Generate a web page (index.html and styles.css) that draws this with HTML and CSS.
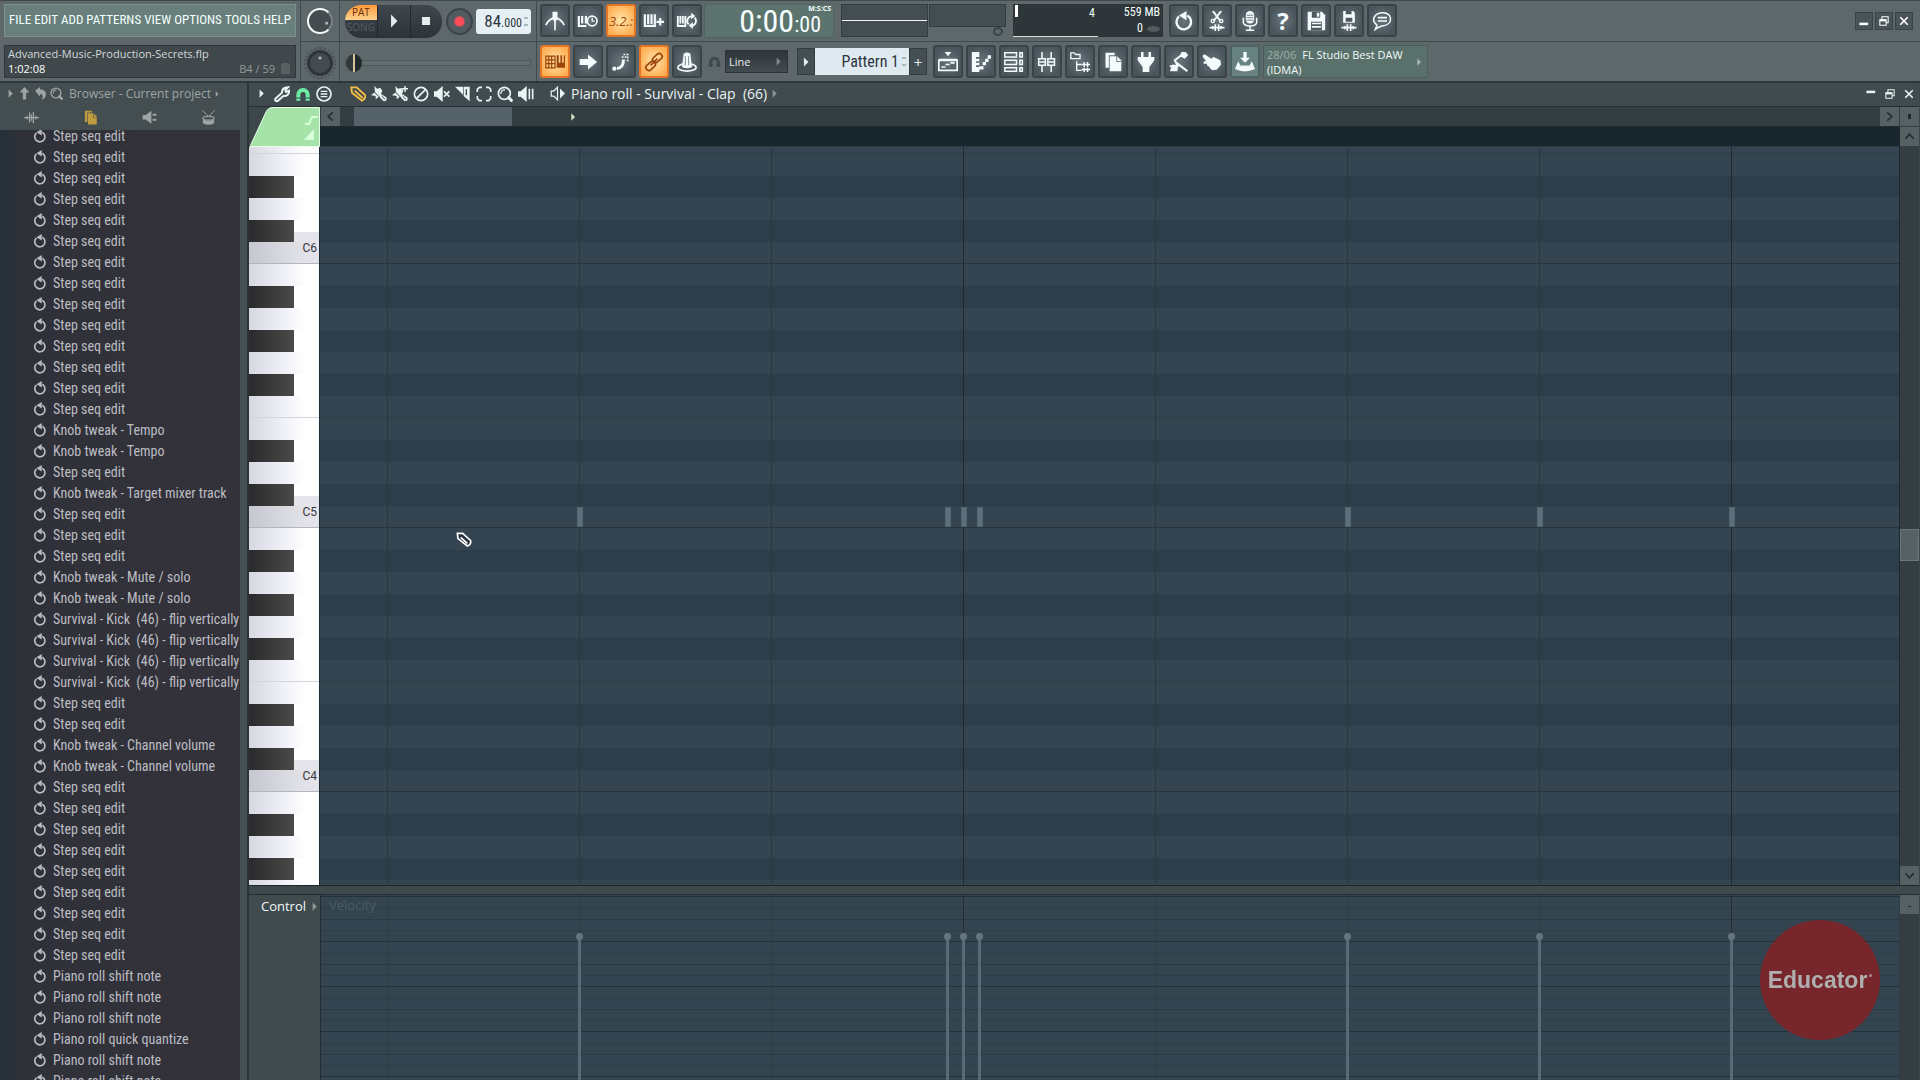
FILE: index.html
```
<!DOCTYPE html>
<html lang="en">
<head>
    <meta charset="UTF-8">
    <meta name="viewport" content="width=device-width, initial-scale=1.0">
    <title>Advanced-Music-Production-Secrets.flp</title>
    <link rel="stylesheet" href="styles.css">
</head>
<body>
    <svg class="sprite" aria-hidden="true">
        <symbol id="undo" viewBox="0 0 24 24"><path d="M6 6.500a8.800 8.800 0 1 0 10-1" fill="none" stroke="currentColor" stroke-width="2.800"/><path d="M15 0v11L6 5.500z" fill="currentColor"/></symbol>
        <symbol id="tri" viewBox="0 0 24 24"><path d="M7 1l11 11L7 23z" fill="currentColor"/></symbol>
        <symbol id="stop" viewBox="0 0 24 24"><path d="M4 4h16v16H4z" fill="currentColor"/></symbol>
        <symbol id="metro" viewBox="0 0 24 24"><path d="M1 17Q5 9 12 8q7 1 11 9M12 8v15" fill="none" stroke="currentColor" stroke-width="2"/><path d="M9 1h6v9l-3 3-3-3z" fill="currentColor"/></symbol>
        <symbol id="wait" viewBox="0 0 24 24"><path d="M1 6v12h9M5 6v9M9.500 6v9" fill="none" stroke="currentColor" stroke-width="2.600"/><circle cx="17" cy="12" r="5.800" fill="none" stroke="currentColor" stroke-width="2"/><path d="M17 8v4h3" fill="none" stroke="currentColor" stroke-width="1.500"/></symbol>
        <symbol id="keysplus" viewBox="0 0 24 24"><path d="M1 4v14h12V4M5 4v12M9 4v12M15 13H24M19.500 8.500v9" fill="none" stroke="currentColor" stroke-width="2.600"/></symbol>
        <symbol id="keysloop" viewBox="0 0 24 24"><path d="M1 6v12h9V6M4 6v9M7 6v9" fill="none" stroke="currentColor" stroke-width="2.200"/><path d="M14 16a5.500 5.500 0 0 1 4-9.500M21 8a5.500 5.500 0 0 1-3 9.500" fill="none" stroke="currentColor" stroke-width="2.200"/><path d="M17 2l5 4-5 4zM19 13.500l-5 4 5 4z" fill="currentColor"/></symbol>
        <symbol id="typing" viewBox="0 0 24 24"><path d="M1 5h11v14H1zM1 9.500h11M1 14h11M4.500 5v14M8 5v14" fill="none" stroke="currentColor" stroke-width="1.500"/><path d="M14 4v15h10V4h-1.500v9h-2V4h-2v9h-2V4z" fill="currentColor"/></symbol>
        <symbol id="arrow" viewBox="0 0 24 24"><path d="M2 8.500h10V3l11 9-11 9v-5.500H2z" fill="currentColor"/></symbol>
        <symbol id="slide" viewBox="0 0 24 24"><path d="M7 20q8-1 8-11" fill="none" stroke="currentColor" stroke-width="3.500"/><circle cx="4" cy="20" r="2.500" fill="currentColor"/><path d="M13 6h7M15 3h6M20 2v10" fill="none" stroke="currentColor" stroke-width="2" stroke-dasharray="2 1.500"/></symbol>
        <symbol id="link" viewBox="0 0 24 24"><g fill="none" stroke="currentColor" stroke-width="2"><rect x="10" y="4" width="13" height="7" rx="3.500" transform="rotate(-42 16 8)"/><rect x="1" y="13" width="13" height="7" rx="3.500" transform="rotate(-42 8 16)"/><path d="M8 16l8-8"/></g></symbol>
        <symbol id="hat" viewBox="0 0 24 24"><ellipse cx="12" cy="18.500" rx="11" ry="4.500" fill="none" stroke="currentColor" stroke-width="2"/><path d="M6 18L8 2q4-3 8 0l2 16q-6 3-12 0z" fill="currentColor"/><path d="M10 5v11M14 5v11" stroke="#69727a"/></symbol>
        <symbol id="magnet" viewBox="0 0 24 24"><path d="M5 22v-9a7 7 0 0 1 14 0v9" fill="none" stroke="currentColor" stroke-width="6"/><path d="M1 18h8M15 18h8" stroke="#3a4347" stroke-width="1.500"/></symbol>
        <symbol id="playlist" viewBox="0 0 24 24"><path d="M8 0h8l-4 5zM1 8h22v3H1z" fill="currentColor"/><path d="M1 9v13h22V9M4 18h5M9 15h5M15 13h5" fill="none" stroke="currentColor" stroke-width="2"/></symbol>
        <symbol id="roll" viewBox="0 0 24 24"><path d="M1 0h9v6H6v2h4v3H6v2h4v3H6v2h4v6H1zM10 17h5v4h-5zM14 12h4v4h-4zM17 8h4v4h-4zM20 4h4v4h-4z" fill="currentColor"/></symbol>
        <symbol id="rack" viewBox="0 0 24 24"><path d="M1 1h14v5H1zM1 10h14v5H1zM1 19h14v4H1zM19 1h3v5h-3zM19 10h3v5h-3zM19 19h3v4h-3z" fill="none" stroke="currentColor" stroke-width="1.800"/></symbol>
        <symbol id="mixer" viewBox="0 0 24 24"><path d="M6 0v8M6 16v8M17 0v8M17 16v8M2 8h8v8H2zM13 8h8v8h-8zM2 12h8M13 12h8" fill="none" stroke="currentColor" stroke-width="1.800"/></symbol>
        <symbol id="tree" viewBox="0 0 24 24"><path d="M1 8V1h4l2 2h5v5zM8 11v11h6M8 15h6" fill="none" stroke="currentColor" stroke-width="1.600"/><path d="M14 15h10M14 21h10M17 12v6M21 12v6M17 19v5M21 19v5" stroke="currentColor" stroke-width="1.800"/></symbol>
        <symbol id="copy" viewBox="0 0 24 24"><path d="M3 1h11v3H7v15H3z" fill="currentColor"/><path d="M8 5h8v7h6v11H8zM17 5l6 6h-6z" fill="currentColor"/></symbol>
        <symbol id="plug" viewBox="0 0 24 24"><path d="M6 0h3v6h6V0h3v6h4v4l-6 8v6H8v-6L2 10V6h4z" fill="currentColor"/></symbol>
        <symbol id="pump" viewBox="0 0 24 24"><path d="M16 3L7 10q2 3 3 7H1M9 13l13 10" fill="none" stroke="currentColor" stroke-width="2.400"/><path d="M15 0h5l3 4-4 4-6-3zM1 23l3-8 7 1-1 7z" fill="currentColor"/></symbol>
        <symbol id="hand" viewBox="0 0 24 24"><path d="M1 4q2-2 4 0l6 4 3-2 8 4 1 5-5 6-5 1-3-2-1-2-3-2v-2l-4 0q-1-2 1-3l2 0-4-5z" fill="currentColor"/></symbol>
        <symbol id="download" viewBox="0 0 24 24"><path d="M10 0h4v7h4l-6 6-6-6h4z" fill="currentColor"/><path d="M4 13l-3 7q11 5 22 0l-3-7-2 4H6z" fill="currentColor" stroke="currentColor" stroke-width="1.500"/></symbol>
        <symbol id="scissors" viewBox="0 0 24 24"><path d="M7 0l9 12M17 0L8 12" stroke="currentColor" stroke-width="2.400"/><circle cx="7" cy="12" r="2" fill="none" stroke="currentColor" stroke-width="1.600"/><circle cx="17" cy="12" r="2" fill="none" stroke="currentColor" stroke-width="1.600"/><path d="M3 20h18M7 18v4M10 16v8M14 16v8M17 18v4" stroke="currentColor" stroke-width="2"/></symbol>
        <symbol id="mic" viewBox="0 0 24 24"><rect x="7" y="0" width="10" height="15" rx="5" fill="currentColor"/><path d="M4 8v6q1 4 8 4t8-4V8M12 18v5M7 23h10" fill="none" stroke="currentColor" stroke-width="1.800"/><path d="M8 5h8M8 8h8M8 11h8" stroke="#59636a"/></symbol>
        <symbol id="save" viewBox="0 0 24 24"><path d="M2 1h17l4 4v18H2z" fill="currentColor"/><path d="M7 1h10v7H7zM6 13h13v10H6z" fill="#4f585f"/><path d="M13 2h3v5h-3zM7 14h11v2H7zM7 18h11v2H7z" fill="currentColor"/></symbol>
        <symbol id="saveas" viewBox="0 0 24 24"><path d="M5 0h12l2 2v12H5z" fill="currentColor"/><path d="M8 0h7v4H8zM8 8h8v5H8z" fill="#4f585f"/><path d="M3 20h18M7 18v4M10 16v8M14 16v8M17 18v4" stroke="currentColor" stroke-width="2"/></symbol>
        <symbol id="chat" viewBox="0 0 24 24"><path d="M4 22l2-5C-2 11 3 2 13 2c12 0 13 15-1 16q-4 1-8 4z" fill="none" stroke="currentColor" stroke-width="1.800"/><path d="M7 8h11M7 12h11" stroke="currentColor" stroke-width="2"/></symbol>
        <symbol id="min" viewBox="0 0 24 24"><path d="M1 16h21v6H1z" fill="currentColor"/></symbol>
        <symbol id="restore" viewBox="0 0 24 24"><path d="M2 9h15v13H2zM7 8V2h15v14h-5" fill="none" stroke="currentColor" stroke-width="2.500"/><path d="M2 8h15v5H2z" fill="currentColor"/></symbol>
        <symbol id="close" viewBox="0 0 24 24"><path d="M3 3l18 18M21 3L3 21" stroke="currentColor" stroke-width="4"/></symbol>
        <symbol id="up" viewBox="0 0 24 24"><path d="M12 0l9 10h-6v13H9V10H3z" fill="currentColor"/></symbol>
        <symbol id="back" viewBox="0 0 24 24"><path d="M2 7l9-7v4q14 1 10 14-2 5-7 5 6-9-3-10v5z" fill="currentColor"/></symbol>
        <symbol id="lens" viewBox="0 0 24 24"><circle cx="11" cy="11" r="9" fill="none" stroke="currentColor" stroke-width="2.500"/><path d="M16 16l7 7" stroke="currentColor" stroke-width="4.500"/><path d="M6 12a5 5 0 0 1 6-6" fill="none" stroke="currentColor" stroke-width="2"/></symbol>
        <symbol id="wave" viewBox="0 0 24 24"><path d="M0 12h24M5 9v6M9 4v16M12 7v10M15 3v18M19 9v6" stroke="currentColor" stroke-width="2"/></symbol>
        <symbol id="horn" viewBox="0 0 24 24"><path d="M1 8h5l9-7v21l-9-7H1zM17 6h6v3h-6zM17 14h6v3h-6z" fill="currentColor"/></symbol>
        <symbol id="drum" viewBox="0 0 24 24"><path d="M2 0l10 11M22 0L12 11" stroke="currentColor" stroke-width="1.500"/><ellipse cx="12" cy="13" rx="9" ry="3" fill="none" stroke="currentColor" stroke-width="2"/><path d="M3 15q9 4 18 0v6q-9 5-18 0z" fill="currentColor"/></symbol>
        <symbol id="wrench" viewBox="0 0 24 24"><path d="M2 19L12 10q0-8 9-8l-4 4 1 3 5-2q-1 9-9 8L5 23q-4 0-3-4z" fill="none" stroke="currentColor" stroke-width="3"/></symbol>
        <symbol id="menu" viewBox="0 0 24 24"><circle cx="12" cy="12" r="10.500" fill="none" stroke="currentColor" stroke-width="2.500"/><path d="M7 8h10M7 12h10M7 16h10" stroke="currentColor" stroke-width="2"/></symbol>
        <symbol id="pencil" viewBox="0 0 24 24"><path d="M2 2h8l13 12q0 6-5 8L3 10zM7 7l12 11" fill="none" stroke="currentColor" stroke-width="2.800"/></symbol>
        <symbol id="brush" viewBox="0 0 24 24"><path d="M5 0l4 4 5-1 3 4-2 5 8 5q2 6-4 6l-7-7-5 4 0-5-7-1 6-5z" fill="currentColor"/><path d="M5 9l8 8M16 15l5 5" stroke="#3d474b" stroke-width="1.500"/></symbol>
        <symbol id="brushplus" viewBox="0 0 24 24"><use href="#brush"/><path d="M15 4h9M19.500 0v9" stroke="currentColor" stroke-width="2.200"/></symbol>
        <symbol id="no" viewBox="0 0 24 24"><circle cx="12" cy="12" r="10" fill="none" stroke="currentColor" stroke-width="2.500"/><path d="M5 19L19 5" stroke="currentColor" stroke-width="2.500"/></symbol>
        <symbol id="mute" viewBox="0 0 24 24"><path d="M0 8h4l9-8v24l-9-8H0z" fill="currentColor"/><path d="M15 8l8 8M23 8l-8 8" stroke="currentColor" stroke-width="2.400"/></symbol>
        <symbol id="slice" viewBox="0 0 24 24"><path d="M0 1h12v12zM13 1h9v22l-9-8z" fill="currentColor"/><path d="M17 5v9" stroke="#3d474b" stroke-width="2"/></symbol>
        <symbol id="select" viewBox="0 0 24 24"><path d="M2 9V5l3-3h4M15 2h4l3 3v4M22 15v4l-3 3h-4M9 22H5l-3-3v-4" fill="none" stroke="currentColor" stroke-width="2.500"/></symbol>
        <symbol id="playback" viewBox="0 0 24 24"><path d="M0 8h4l9-8v24l-9-8H0z" fill="currentColor"/><path d="M17 4v16M22 4v16" stroke="currentColor" stroke-width="2.500"/></symbol>
        <symbol id="speaker" viewBox="0 0 24 24"><path d="M2 8h4l6-6v20l-6-6H2z" fill="none" stroke="currentColor" stroke-width="2"/><path d="M16 4l8 8-8 8z" fill="currentColor"/></symbol>
        <symbol id="chev" viewBox="0 0 24 24"><path d="M7 3l10 9-10 9" fill="none" stroke="currentColor" stroke-width="3.500"/></symbol>
    </svg>

    <header class="toolbar">
        <div class="menu-panel">
            <nav class="menu">
                <button>FILE</button><button>EDIT</button><button>ADD</button><button>PATTERNS</button><button>VIEW</button><button>OPTIONS</button><button>TOOLS</button><button>HELP</button>
            </nav>
            <div class="hint">
                <span>Advanced-Music-Production-Secrets.flp</span>
                <div class="hint-row"><b>1:02:08</b><span class="hint-key">B4 / 59</span><i class="hint-icon"></i></div>
            </div>
        </div>
        <div class="knobs">
            <div class="cell"><i class="knob ring"></i></div>
            <div class="cell"><i class="knob dots"></i></div>
        </div>
        <div class="transport">
            <div class="cell">
                <div class="play-group">
                    <button class="mode"><span class="pat">PAT</span><span class="song">SONG</span></button>
                    <button class="play" aria-label="Play"><svg><use href="#tri"/></svg></button>
                    <button class="stop" aria-label="Stop"><svg><use href="#stop"/></svg></button>
                </div>
                <button class="rec" aria-label="Record"></button>
                <div class="tempo"><b>84</b><span>.000</span><i class="spin"></i></div>
            </div>
            <div class="cell"><input class="pitch" type="range" min="0" max="100" value="0" aria-label="Song position"></div>
        </div>
        <div class="panels">
            <div class="panel-row">
                <div class="tools">
                    <button class="tool" aria-label="Metronome"><svg><use href="#metro"/></svg></button>
                    <button class="tool" aria-label="Wait for input"><svg><use href="#wait"/></svg></button>
                    <button class="tool on" aria-label="Countdown"><span class="count">3.2.:</span></button>
                    <button class="tool" aria-label="Overdub"><svg><use href="#keysplus"/></svg></button>
                    <button class="tool" aria-label="Loop record"><svg><use href="#keysloop"/></svg></button>
                </div>
                <div class="time"><span class="big">0:00</span><span class="cs">:00</span><small>M:S:CS</small></div>
                <div class="scope"><div class="scope-wave"></div><div class="scope-side"><i class="scope-peak"></i><i class="scope-knob"></i></div></div>
                <div class="cpu">
                    <div class="cpu-left"><i></i><span>4</span></div>
                    <div class="cpu-right"><span>559 MB</span><span class="poly">0<i></i></span></div>
                </div>
                <div class="tools">
                    <button class="tool" aria-label="Undo"><svg><use href="#undo"/></svg></button>
                    <button class="tool" aria-label="Cut"><svg><use href="#scissors"/></svg></button>
                    <button class="tool" aria-label="Record audio"><svg><use href="#mic"/></svg></button>
                    <button class="tool help">?</button>
                    <button class="tool" aria-label="Save"><svg><use href="#save"/></svg></button>
                    <button class="tool" aria-label="Render"><svg><use href="#saveas"/></svg></button>
                    <button class="tool" aria-label="Chat"><svg><use href="#chat"/></svg></button>
                </div>
                <div class="win-buttons">
                    <button aria-label="Minimize"><svg><use href="#min"/></svg></button>
                    <button aria-label="Restore"><svg><use href="#restore"/></svg></button>
                    <button aria-label="Close"><svg><use href="#close"/></svg></button>
                </div>
            </div>
            <div class="panel-row">
                <div class="tools">
                    <button class="tool on" aria-label="Typing keyboard"><svg><use href="#typing"/></svg></button>
                    <button class="tool" aria-label="Step edit"><svg><use href="#arrow"/></svg></button>
                    <button class="tool" aria-label="Slide"><svg><use href="#slide"/></svg></button>
                    <button class="tool on" aria-label="Link"><svg><use href="#link"/></svg></button>
                    <button class="tool" aria-label="Multilink"><svg><use href="#hat"/></svg></button>
                </div>
                <div class="snap">
                    <svg class="snap-magnet"><use href="#magnet"/></svg>
                    <div class="snap-select"><select aria-label="Snap"><option>Line</option></select><svg><use href="#tri"/></svg></div>
                </div>
                <div class="pattern">
                    <button aria-label="Pattern menu"><svg><use href="#tri"/></svg></button>
                    <input type="text" value="Pattern 1" aria-label="Pattern">
                    <i class="spin"></i>
                    <button>+</button>
                </div>
                <div class="tools">
                    <button class="tool" aria-label="Playlist"><svg><use href="#playlist"/></svg></button>
                    <button class="tool" aria-label="Piano roll"><svg><use href="#roll"/></svg></button>
                    <button class="tool" aria-label="Channel rack"><svg><use href="#rack"/></svg></button>
                    <button class="tool" aria-label="Mixer"><svg><use href="#mixer"/></svg></button>
                    <button class="tool" aria-label="Browser"><svg><use href="#tree"/></svg></button>
                    <button class="tool" aria-label="Project picker"><svg><use href="#copy"/></svg></button>
                    <button class="tool" aria-label="Plugin picker"><svg><use href="#plug"/></svg></button>
                    <button class="tool" aria-label="Tempo tapper"><svg><use href="#pump"/></svg></button>
                    <button class="tool" aria-label="Touch"><svg><use href="#hand"/></svg></button>
                    <button class="tool green" aria-label="Updates"><svg><use href="#download"/></svg></button>
                </div>
                <a class="news" href="#"><span><time>28/06</time>FL Studio Best DAW<br>(IDMA)</span><svg><use href="#tri"/></svg></a>
            </div>
        </div>
    </header>

    <main class="workspace">
        <aside class="browser">
            <div class="browser-head">
                <div class="browser-title">
                    <svg class="small"><use href="#tri"/></svg><svg><use href="#up"/></svg><svg><use href="#back"/></svg><svg><use href="#lens"/></svg>
                    <span>Browser - Current project</span><svg class="tiny"><use href="#tri"/></svg>
                </div>
                <div class="browser-tabs">
                    <button aria-label="All"><svg><use href="#wave"/></svg></button>
                    <button class="active" aria-label="Project"><svg><use href="#copy"/></svg></button>
                    <button aria-label="Plugins"><svg><use href="#horn"/></svg></button>
                    <button aria-label="Drums"><svg><use href="#drum"/></svg></button>
                </div>
            </div>
            <ul class="history" id="history"></ul>
        </aside>

        <section class="piano">
            <div class="piano-bar">
                <div class="icons">
                    <svg class="small"><use href="#tri"/></svg>
                    <svg><use href="#wrench"/></svg>
                    <svg class="mint"><use href="#magnet"/></svg>
                    <svg><use href="#menu"/></svg>
                </div>
                <div class="icons">
                    <svg class="gold"><use href="#pencil"/></svg>
                    <svg><use href="#brush"/></svg>
                    <svg><use href="#brushplus"/></svg>
                    <svg><use href="#no"/></svg>
                    <svg><use href="#mute"/></svg>
                    <svg><use href="#slice"/></svg>
                    <svg><use href="#select"/></svg>
                    <svg><use href="#lens"/></svg>
                    <svg><use href="#playback"/></svg>
                </div>
                <svg><use href="#speaker"/></svg>
                <h1>Piano roll - Survival - Clap&nbsp; (66)</h1>
                <svg class="small dim"><use href="#tri"/></svg>
                <div class="piano-win">
                    <svg class="lift"><use href="#min"/></svg><svg><use href="#restore"/></svg><svg><use href="#close"/></svg>
                </div>
            </div>
            <div class="roll">
                <div class="corner">
                    <svg viewBox="0 0 71 40">
                        <path d="M1 39.500L17 5q2-4.500 7-4.500h46.500v39z" fill="#a5e3a8" stroke="#e4ffe6"/>
                        <path d="M56 17h4l3-7h6" fill="none" stroke="#d6ffda" stroke-width="2"/>
                        <path d="M55 33h10V22z" fill="#d6ffda"/>
                    </svg>
                </div>
                <div class="hscroll">
                    <button class="flip" aria-label="Scroll left"><svg><use href="#chev"/></svg></button>
                    <div class="thumb"></div>
                    <svg class="marker"><use href="#tri"/></svg>
                    <button class="end" aria-label="Scroll right"><svg><use href="#chev"/></svg></button>
                </div>
                <button class="dot" aria-label="Zoom"><i></i></button>
                <div class="ruler"></div>
                <div class="vscroll">
                    <button class="turn-up" aria-label="Scroll up"><svg><use href="#chev"/></svg></button>
                    <div class="vthumb"></div>
                    <button class="turn-down" aria-label="Scroll down"><svg><use href="#chev"/></svg></button>
                </div>
                <div class="keys" id="keys"></div>
                <div class="grid" id="grid">
                    <svg class="cursor" viewBox="0 0 24 24"><path d="M2 2h8l12 11q1 6-5 8L3 10z" fill="#26303a" stroke="#fff" stroke-width="2.500"/><path d="M7 8l10 9" stroke="#fff" stroke-width="2.500"/></svg>
                </div>
                <div class="split"></div>
                <div class="control"><button>Control<svg><use href="#tri"/></svg></button></div>
                <div class="velocity" id="velocity"><span>Velocity</span></div>
                <div class="control-side"><button>-</button></div>
            </div>
        </section>
    </main>
    <div class="educator">Educator<i></i></div>
    <script src="script.js"></script>
</body>
</html>
```
FILE: styles.css
```
* {
    margin: 0;
    padding: 0;
    box-sizing: border-box;
}

:root {
    --panel: #5e686b;
    --line: #3f4a4d;
    --dark: #3c4649;
    --narrow: "Roboto Condensed", "Open Sans Condensed", "Open Sans", sans-serif;
    --sans: "Open Sans", "Noto Sans", sans-serif;
}

body {
    height: 100vh;
    display: flex;
    flex-direction: column;
    overflow: hidden;
    background: var(--dark);
    color: #e4edee;
    font-family: var(--sans);
    font-size: 13px;
}

button, input, select {
    border: none;
    background: none;
    color: inherit;
    font: inherit;
}

svg {
    display: block;
    flex: none;
    width: 15px;
    height: 15px;
}

.sprite {
    position: absolute;
    width: 0;
    height: 0;
}

/* toolbar */

.toolbar {
    height: 83px;
    flex: none;
    display: flex;
    background: var(--panel);
    border-top: 1px solid var(--line);
    border-bottom: 2px solid #2e383b;
}

.menu-panel {
    width: 301px;
    padding: 3px 4px;
    display: flex;
    flex-direction: column;
    gap: 8px;
    border-right: 1px solid var(--line);
}

.menu {
    height: 33px;
    padding: 0 4px 2px;
    display: flex;
    align-items: center;
    justify-content: space-between;
    background: #687f7b;
    border: 1px solid #7b918d;
    font-family: var(--narrow);
    font-size: 13px;
    color: #f4ffff;
}

.hint {
    height: 33px;
    padding: 0 3px;
    background: #40484c;
    border: 1px solid #30383b;
    font-size: 11px;
    line-height: 15px;
    color: #d0d8d9;
}

.hint-row {
    display: flex;
    align-items: center;
}

.hint-row b {
    flex: 1;
    font-weight: 500;
    color: #fff;
}

.hint-key {
    color: #93999b;
}

.hint-icon {
    width: 9px;
    height: 11px;
    margin: 0 2px 0 6px;
    background: #596063;
    border-radius: 3px 3px 0 0;
}

.knobs {
    width: 39px;
    border-right: 1px solid var(--line);
}

.cell {
    height: 41px;
    display: flex;
    align-items: center;
    justify-content: center;
    border-bottom: 1px solid var(--line);
}

.cell:last-child {
    border-bottom: none;
}

.knob {
    width: 26px;
    height: 26px;
    border-radius: 50%;
    background: radial-gradient(circle at 50% 25%, #aab4b6 1px, #444c50 2px);
}

.ring {
    border: 2px solid #f2fafa;
    border-right-color: #788386;
    background: radial-gradient(circle at 80% 60%, #aab4b6 1px, #444c50 2px);
}

.dots {
    border: 3px solid #2f373a;
    outline: 2px dotted #48535a;
    outline-offset: 1px;
}

.transport {
    width: 197px;
    border-right: 1px solid var(--line);
}

.transport .cell {
    justify-content: flex-start;
    padding: 0 5px;
}

.play-group {
    width: 98px;
    height: 33px;
    display: flex;
    border-radius: 16px;
    overflow: hidden;
    background: linear-gradient(#3f464d, #2d3339);
}

.play-group button {
    flex: 1;
    display: flex;
    align-items: center;
    justify-content: center;
    border-left: 1px solid #23282d;
}

.play-group .mode {
    flex-direction: column;
    justify-content: flex-start;
    border-left: none;
    font-size: 10px;
    line-height: 15px;
}

.pat {
    width: 100%;
    background: linear-gradient(#ff9b3d, #ffd28f);
    color: #6b2f05;
}

.song {
    color: #555d63;
}

.play-group svg {
    width: 12px;
    height: 12px;
}

.play svg {
    width: 14px;
    height: 14px;
}

.rec {
    width: 27px;
    height: 27px;
    margin: 0 3px 0 4px;
    border-radius: 50%;
    border: 2px solid #3a4349;
    background: radial-gradient(circle, #ff4b55 0 4px, #505a60 6px);
}

.tempo {
    width: 55px;
    height: 25px;
    display: flex;
    align-items: baseline;
    justify-content: flex-end;
    padding: 0 9px 0 0;
    position: relative;
    border-radius: 3px;
    background: #e6f0f4;
    color: #2c3640;
    font-family: var(--narrow);
    font-size: 12px;
    line-height: 25px;
}

.tempo b {
    font-size: 17px;
    font-weight: normal;
}

.spin {
    position: absolute;
    right: 3px;
    top: 8px;
    width: 4px;
    height: 9px;
    border: solid #a9b9c0;
    border-width: 2px 0;
}

.pitch {
    width: 186px;
    height: 26px;
    appearance: none;
    background: none;
}

.pitch::-webkit-slider-runnable-track {
    height: 6px;
    border: 1px solid #4d585b;
    background: #626d70;
}

.pitch::-webkit-slider-thumb {
    appearance: none;
    width: 16px;
    height: 18px;
    margin-top: -7px;
    border-radius: 50%;
    background: linear-gradient(90deg, #33383b 7px, #d5c59a 7px 9px, #24292b 9px);
}

.panels {
    flex: 1;
    display: flex;
    flex-direction: column;
}

.panel-row {
    height: 41px;
    padding: 3px 7px 4px 3px;
    display: flex;
    align-items: center;
    border-bottom: 1px solid var(--line);
}

.panel-row:last-child {
    padding-bottom: 5px;
    border-bottom: none;
}

.tools {
    display: flex;
    gap: 3px;
}

.tool {
    width: 30px;
    height: 33px;
    display: flex;
    align-items: center;
    justify-content: center;
    border: 2px solid #39434a;
    border-radius: 3px;
    background: radial-gradient(#68737b, #4a545b 75%);
    color: #f3fbfc;
}

.tool svg {
    width: 22px;
    height: 20px;
}

.tool.on {
    border-color: #e37528;
    background: radial-gradient(#ffe6ae, #ffac4e 85%);
    color: #9b4509;
}

.tool.green {
    border-color: #4b6462;
    background: #678280;
}

.count {
    font-style: italic;
    font-size: 13px;
}

.help {
    font-size: 24px;
    font-weight: bold;
}

.time {
    width: 130px;
    height: 34px;
    margin: 0 7px 0 2px;
    padding-right: 12px;
    position: relative;
    display: flex;
    align-items: flex-end;
    justify-content: flex-end;
    background: #5c736e;
    border: 1px solid #506560;
    font-family: var(--narrow);
    color: #f4ffff;
}

.big {
    font-size: 32px;
    line-height: 32px;
}

.cs {
    font-size: 22px;
    line-height: 24px;
}

.time small {
    position: absolute;
    top: 0;
    right: 2px;
    font-family: var(--sans);
    font-size: 7px;
    font-weight: bold;
    line-height: 8px;
}

.scope {
    height: 33px;
    display: flex;
}

.scope-wave {
    width: 87px;
    border: 1px solid #333c41;
    background: linear-gradient(#444d52 15px, #f2f8f8 15px 16px, #444d52 16px);
}

.scope-side {
    width: 78px;
    display: flex;
    flex-direction: column;
    align-items: flex-end;
}

.scope-peak {
    width: 77px;
    height: 23px;
    background: #444d52;
    border: 1px solid #333c41;
}

.scope-knob {
    width: 10px;
    height: 9px;
    margin-right: 3px;
    border: 2px solid #3b4548;
    border-radius: 50%;
}

.cpu {
    width: 150px;
    height: 33px;
    margin: 0 6px 0 7px;
    display: flex;
    background: #2e3639;
    font-family: var(--narrow);
    font-size: 12px;
    line-height: 16px;
    color: #f4ffff;
}

.cpu-left {
    width: 85px;
    padding: 1px 3px 0 2px;
    display: flex;
    justify-content: space-between;
    border-bottom: 1px solid #d7dedf;
}

.cpu-left i {
    width: 3px;
    height: 12px;
    background: #fff;
}

.cpu-right {
    flex: 1;
    padding-right: 3px;
    text-align: right;
}

.cpu-right span {
    display: block;
}

.poly i {
    display: inline-block;
    width: 13px;
    height: 6px;
    margin-left: 4px;
    border-radius: 50%;
    background: #535d60;
}

.win-buttons {
    margin-left: auto;
    display: flex;
    gap: 2px;
}

.win-buttons button {
    width: 18px;
    height: 18px;
    display: flex;
    align-items: center;
    justify-content: center;
    background: #48535a;
    border: 1px solid #39434a;
    color: #fff;
}

.win-buttons svg {
    width: 10px;
    height: 10px;
}

.snap {
    width: 86px;
    margin-right: 9px;
    padding-left: 6px;
    display: flex;
    align-items: center;
    justify-content: space-between;
}

.snap-magnet {
    width: 13px;
    height: 13px;
    color: #414b4f;
}

.snap-select {
    width: 63px;
    height: 23px;
    padding: 0 4px 0 3px;
    display: flex;
    align-items: center;
    border: 1px solid #2d3439;
    background: linear-gradient(#2e363b, #424b50);
    font-size: 11px;
}

.snap-select select {
    flex: 1;
    appearance: none;
}

.snap-select svg {
    width: 9px;
    height: 9px;
    color: #7b868a;
}

.pattern {
    height: 27px;
    margin-right: 6px;
    display: flex;
    position: relative;
}

.pattern button {
    width: 18px;
    display: flex;
    align-items: center;
    justify-content: center;
    background: #454e54;
    border: 1px solid #333c41;
    font-size: 15px;
}

.pattern button svg {
    width: 10px;
    height: 10px;
}

.pattern input {
    width: 94px;
    padding-right: 10px;
    background: #dfeaf0;
    color: #2c3640;
    font-family: var(--narrow);
    font-size: 16px;
    text-align: right;
}

.pattern .spin {
    right: 21px;
    top: 9px;
}

.news {
    width: 165px;
    height: 33px;
    margin-left: 3px;
    padding: 0 4px 0 3px;
    display: flex;
    align-items: center;
    justify-content: space-between;
    background: #5a706b;
    border: 1px solid #4b5f5b;
    color: #f2fbfa;
    font-size: 11px;
    line-height: 15px;
    text-decoration: none;
}

.news time {
    margin-right: 6px;
    color: #9fb0ad;
}

.news svg {
    width: 8px;
    height: 8px;
    color: #a5b5b2;
}

/* browser */

.workspace {
    flex: 1;
    min-height: 0;
    display: flex;
}

.browser {
    width: 247px;
    flex: none;
    display: flex;
    flex-direction: column;
    border-right: 7px solid #465054;
    background: linear-gradient(90deg, #25313a, #2f3039 20px, #33323a 75%);
}

.browser-head {
    height: 47px;
    flex: none;
    position: relative;
    background: #444e51;
    color: #9da5a6;
}

.browser-title {
    height: 21px;
    padding-left: 6px;
    display: flex;
    align-items: center;
    gap: 3px;
    font-size: 12px;
}

.browser-title span {
    margin-left: 3px;
}

.browser-title svg {
    width: 13px;
    height: 13px;
}

.browser-title .small, .piano-bar .small {
    width: 9px;
    height: 9px;
}

.browser-title .tiny {
    width: 6px;
    height: 6px;
}

.browser-tabs {
    height: 26px;
    display: flex;
    justify-content: space-between;
    padding: 4px 24px;
}

.browser-tabs .active {
    color: #c19c3f;
}

.history {
    flex: 1;
    min-height: 0;
    margin: -4px -6px 0 0;
    overflow: hidden;
    list-style: none;
    color: #bcbdc3;
    font-family: var(--narrow);
    font-size: 14px;
    line-height: 19px;
}

.history li {
    height: 21px;
    padding: 0 0 1px 33px;
    display: flex;
    align-items: center;
    gap: 6px;
    white-space: pre;
}

.history svg {
    width: 14px;
    height: 14px;
}

/* piano roll */

.piano {
    flex: 1;
    min-width: 0;
    padding-right: 1px;
    display: flex;
    flex-direction: column;
    border-left: 2px solid #2a3337;
}

.piano-bar {
    height: 24px;
    flex: none;
    padding: 0 5px 2px 8px;
    display: flex;
    align-items: center;
    border-bottom: 1px solid #262f33;
    background: #414b4f;
    color: #e9f3f3;
}

.icons {
    display: flex;
    align-items: center;
    gap: 5px;
    margin-right: 16px;
}

.icons:first-child {
    margin-right: 18px;
}

.icons .small {
    margin-right: 3px;
}

.icons svg:not(.small) {
    width: 16px;
    height: 16px;
}

.mint {
    color: #70eda5;
}

.gold {
    color: #f6bf43;
}

.dim {
    margin-left: 3px;
    color: #879294;
}

.piano-bar h1 {
    margin-left: 6px;
    font-size: 14px;
    font-weight: normal;
    line-height: 20px;
}

.piano-win {
    margin-left: auto;
    display: flex;
    gap: 9px;
}

.piano-win svg {
    width: 10px;
    height: 10px;
}

.piano-win .lift {
    margin-top: -5px;
}

.roll {
    flex: 1;
    min-height: 0;
    display: grid;
    grid-template-columns: 71px 1fr 20px;
    grid-template-rows: 20px 20px 1fr 10px 185px;
    background: #343e40;
}

.corner {
    grid-row: span 2;
    background: #3d474a;
}

.corner svg {
    width: 71px;
    height: 40px;
}

.hscroll {
    display: flex;
    align-items: center;
    padding-left: 1px;
    border-bottom: 1px solid #202a2d;
}

.roll button {
    display: flex;
    align-items: center;
    justify-content: center;
}

.hscroll button, .vscroll button, .dot, .control-side button {
    width: 19px;
    height: 19px;
    background: #566164;
    color: #222c2f;
}

.hscroll button svg, .vscroll button svg {
    width: 11px;
    height: 11px;
}

.flip svg {
    transform: rotate(180deg);
}

.turn-up svg {
    transform: rotate(-90deg);
}

.turn-down svg {
    transform: rotate(90deg);
}

.thumb {
    width: 158px;
    height: 19px;
    margin: 0 57px 0 14px;
    background: #56626a;
}

.marker {
    width: 8px;
    height: 8px;
    color: #cfe8c4;
}

.end {
    margin-left: auto;
}

.dot {
    margin-left: 1px;
}

.dot i {
    width: 3px;
    height: 5px;
    background: #1d2629;
}

.ruler {
    background: #18262d;
    border-bottom: 1px solid #2a3a42;
}

.vscroll {
    grid-row: span 2;
    display: flex;
    flex-direction: column;
    align-items: flex-end;
    border-left: 1px solid #1e292d;
}

.vthumb {
    width: 19px;
    height: 32px;
    margin-top: 383px;
    background: #566164;
    border: 1px solid #6c7779;
}

.turn-down {
    margin-top: auto;
}

.keys {
    min-height: 0;
    overflow: hidden;
    border-right: 1px solid #1c2b34;
    background: #fff;
}

.keys div {
    height: 22px;
    display: flex;
    justify-content: flex-end;
    padding-right: 2px;
    color: #36363e;
    font-family: Roboto, sans-serif;
    font-size: 12px;
    line-height: 12px;
    background: linear-gradient(90deg, #d7d7e0, #f4f4fb 40px, #fff 56px);
}

/* the top key is cut off by the ruler */
.keys div:first-child {
    height: 7px;
}

.keys .black {
    background: linear-gradient(90deg, #2a2a2c, #4a4a4a 45px, #fff 45px);
}

.keys .edge {
    border-bottom: 1px solid #d4d4dd;
}

.keys .c {
    border-bottom: 1px solid #b5b5bf;
    background: linear-gradient(90deg, #c6c6cf, #dedee5 45px, #e4e4ea);
}

.keys .csharp {
    background:
        linear-gradient(90deg, #2a2a2c, #4a4a4a) 0 0 / 45px 22px no-repeat,
        linear-gradient(#fff 12px, #e4e4ea 12px);
}

.grid {
    position: relative;
    overflow: hidden;
    background:
        linear-gradient(90deg, #1c2a34 1px, transparent 1px) 643px 0 / 768px 100%,
        linear-gradient(90deg, #283843 1px, transparent 1px) 67px 0 / 192px 100%,
        linear-gradient(
            #344551 22px, #2d3d49 22px 44px, #344551 44px 66px, #2d3d49 66px 88px,
            #344551 88px 110px, #2d3d49 110px 132px, #344551 132px 153px, #2f3f4a 153px 154px,
            #344551 154px 176px, #2d3d49 176px 198px, #344551 198px 220px, #2d3d49 220px 242px,
            #344551 242px 263px, #25343f 263px) 0 117px / 100% 264px;
}

.note {
    position: absolute;
    top: 360px;
    width: 6px;
    height: 20px;
    background: #5d6f7a;
    border: 1px solid #536570;
}

.cursor {
    position: absolute;
    left: 136px;
    top: 385px;
    width: 16px;
    height: 16px;
}

.split {
    grid-column: span 3;
    background: #3e494b;
    border-top: 1px solid #1c272b;
    border-bottom: 1px solid #232f35;
}

.control {
    background: #404b4e;
}

.control button {
    padding: 2px 3px 0 12px;
    color: #f1f8f8;
}

.control svg {
    width: 9px;
    height: 9px;
    margin-left: 4px;
    color: #8d9799;
}

.velocity {
    position: relative;
    overflow: hidden;
    border-left: 1px solid #1e2c35;
    background:
        linear-gradient(90deg, #1f2e38 1px, transparent 1px) 642px 0 / 768px 100%,
        linear-gradient(90deg, #2c3c47 1px, transparent 1px) 66px 0 / 192px 100%,
        linear-gradient(
            #22323d 1px, #344551 1px 12px, #2e3f4a 12px 13px, #344551 13px 23px,
            #2b3b46 23px 24px, #344551 24px 34px, #2e3f4a 34px 35px, #344551 35px) 0 1px / 100% 45px;
}

.velocity span {
    display: block;
    padding: 1px 8px;
    color: #4b5b66;
}

.stem {
    position: absolute;
    top: 42px;
    bottom: 0;
    width: 3px;
    background: #586a75;
}

.stem::before {
    content: "";
    position: absolute;
    left: -2px;
    top: -4px;
    width: 7px;
    height: 7px;
    border-radius: 50%;
    background: #657681;
}

.control-side {
    padding-left: 1px;
}

.educator {
    position: fixed;
    right: 40px;
    bottom: 40px;
    width: 120px;
    height: 120px;
    display: flex;
    align-items: center;
    justify-content: center;
    border-radius: 50%;
    background: #77262b;
    color: #afafaf;
    font-family: "Liberation Sans", sans-serif;
    font-size: 23px;
    font-weight: bold;
}

.educator i {
    width: 3px;
    height: 3px;
    margin: 0 0 10px 2px;
    border-radius: 50%;
    background: #a58a8c;
}
```
FILE: script.js
```
const entries = [
    ["Step seq edit", 14],
    ["Knob tweak - Tempo", 2],
    ["Step seq edit", 1],
    ["Knob tweak - Target mixer track", 1],
    ["Step seq edit", 3],
    ["Knob tweak - Mute / solo", 2],
    ["Survival - Kick  (46) - flip vertically", 4],
    ["Step seq edit", 2],
    ["Knob tweak - Channel volume", 2],
    ["Step seq edit", 9],
    ["Piano roll shift note", 3],
    ["Piano roll quick quantize", 1],
    ["Piano roll shift note", 2]
];

const list = document.getElementById("history");
entries.forEach(([text, count]) => {
    for (let i = 0; i < count; i++) {
        const li = document.createElement("li");
        li.innerHTML = '<svg><use href="#undo"/></svg>';
        li.append(text);
        list.appendChild(li);
    }
});

// keyboard, from F6 downwards
const keys = document.getElementById("keys");
for (let n = 77; n > 42; n--) {
    const step = n % 12;
    const key = document.createElement("div");
    if ([1, 3, 6, 8, 10].includes(step)) key.className = step === 1 ? "csharp" : "black";
    if (step === 5) key.className = "edge";
    if (step === 0) {
        key.className = "c";
        key.textContent = "C" + n / 12;
    }
    keys.appendChild(key);
}

const beat = 192;
const start = 68;
const notes = [1, 2.917, 3, 3.083, 5, 6, 7];
notes.forEach(pos => {
    const x = Math.round(start + pos * beat);

    const note = document.createElement("div");
    note.className = "note";
    note.style.left = `${x - 3}px`;
    document.getElementById("grid").appendChild(note);

    const stem = document.createElement("div");
    stem.className = "stem";
    stem.style.left = `${x - 3}px`;
    document.getElementById("velocity").appendChild(stem);
});
```
